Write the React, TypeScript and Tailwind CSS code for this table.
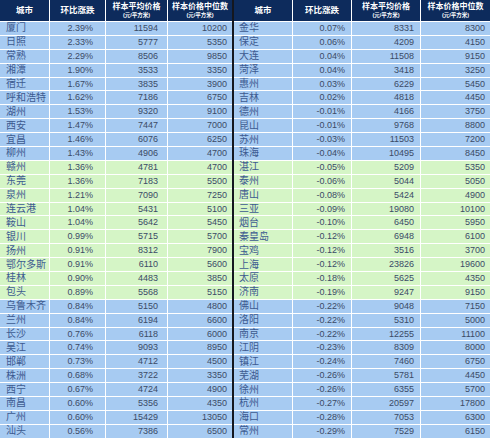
import * as React from "react";

type Row = [string, string, string, string];

const left: Row[] = [
  ["厦门", "2.39%", "11594", "10200"],
  ["日照", "2.33%", "5777", "5350"],
  ["常熟", "2.29%", "8506", "9850"],
  ["湘潭", "1.90%", "3533", "3350"],
  ["宿迁", "1.67%", "3835", "3900"],
  ["呼和浩特", "1.62%", "7186", "6750"],
  ["湖州", "1.53%", "9320", "9100"],
  ["西安", "1.47%", "7447", "7000"],
  ["宜昌", "1.46%", "6076", "6250"],
  ["柳州", "1.43%", "4906", "4700"],
  ["赣州", "1.36%", "4781", "4700"],
  ["东莞", "1.36%", "7183", "5500"],
  ["泉州", "1.21%", "7090", "7250"],
  ["连云港", "1.04%", "5431", "5100"],
  ["鞍山", "1.04%", "5642", "5450"],
  ["银川", "0.99%", "5715", "5700"],
  ["扬州", "0.91%", "8312", "7900"],
  ["鄂尔多斯", "0.91%", "6110", "5600"],
  ["桂林", "0.90%", "4483", "3850"],
  ["包头", "0.89%", "5568", "5150"],
  ["乌鲁木齐", "0.84%", "5150", "4800"],
  ["兰州", "0.84%", "6194", "6600"],
  ["长沙", "0.76%", "6118", "6000"],
  ["吴江", "0.74%", "9093", "8950"],
  ["邯郸", "0.73%", "4712", "4500"],
  ["株洲", "0.68%", "3722", "3350"],
  ["西宁", "0.67%", "4724", "4900"],
  ["南昌", "0.60%", "5356", "4350"],
  ["广州", "0.60%", "15429", "13050"],
  ["汕头", "0.56%", "7386", "6500"],
];

const right: Row[] = [
  ["金华", "0.07%", "8331", "8300"],
  ["保定", "0.06%", "4209", "4150"],
  ["大连", "0.04%", "11508", "9150"],
  ["菏泽", "0.04%", "3418", "3250"],
  ["惠州", "0.03%", "6229", "5450"],
  ["吉林", "0.02%", "4818", "4450"],
  ["德州", "-0.01%", "4166", "3750"],
  ["昆山", "-0.01%", "9768", "8800"],
  ["苏州", "-0.03%", "11503", "7200"],
  ["珠海", "-0.04%", "10495", "8450"],
  ["湛江", "-0.05%", "5209", "5350"],
  ["泰州", "-0.06%", "5044", "5050"],
  ["唐山", "-0.08%", "5424", "4900"],
  ["三亚", "-0.09%", "19080", "10100"],
  ["烟台", "-0.10%", "6450", "5950"],
  ["秦皇岛", "-0.12%", "6948", "6100"],
  ["宝鸡", "-0.12%", "3516", "3700"],
  ["上海", "-0.12%", "23826", "19600"],
  ["太原", "-0.18%", "5625", "4350"],
  ["济南", "-0.19%", "9247", "9150"],
  ["佛山", "-0.22%", "9048", "7150"],
  ["洛阳", "-0.22%", "5310", "5000"],
  ["南京", "-0.22%", "12255", "11100"],
  ["江阴", "-0.23%", "8309", "8000"],
  ["镇江", "-0.24%", "7460", "6750"],
  ["芜湖", "-0.26%", "5781", "4450"],
  ["徐州", "-0.26%", "6355", "5700"],
  ["杭州", "-0.27%", "20597", "17800"],
  ["海口", "-0.28%", "7053", "6300"],
  ["常州", "-0.29%", "7529", "6150"],
];

// rows 11-20 are green, the rest blue
const rowBg = (i: number) => (i >= 10 && i < 20 ? "bg-[#d5f5c6]" : "bg-[#a7cbf2]");

const head = "flex items-center justify-center bg-[#0d2b5c] leading-none text-white font-bold";

function Half({ rows, cols, pads }: { rows: Row[]; cols: string; pads: [string, string, string, string] }) {
  return (
    <div className={`grid ${cols} grid-rows-[21px_repeat(30,12.9px)] gap-px bg-white`}>
      <div className={`${head} text-[8.5px]`}>城市</div>
      <div className={`${head} text-[8.5px]`}>环比涨跌</div>
      <div className={`${head} flex-col`}>
        <span className="text-[8px]">样本平均价格</span>
        <span className="mt-[2px] text-[5.5px]">(元/平方米)</span>
      </div>
      <div className={`${head} flex-col`}>
        <span className="text-[8px]">样本价格中位数</span>
        <span className="mt-[2px] text-[5.5px]">(元/平方米)</span>
      </div>
      {rows.map((r, i) => (
        <React.Fragment key={r[0]}>
          <div className={`${rowBg(i)} ${pads[0]} flex items-center text-[10px] leading-none text-[#3d5a90]`}>{r[0]}</div>
          <div className={`${rowBg(i)} ${pads[1]} flex items-center justify-end text-[9px] leading-none text-[#3b4a66]`}>{r[1]}</div>
          <div className={`${rowBg(i)} ${pads[2]} flex items-center justify-end text-[9px] leading-none text-[#3b4a66]`}>{r[2]}</div>
          <div className={`${rowBg(i)} ${pads[3]} flex items-center justify-end text-[9px] leading-none text-[#3b4a66]`}>{r[3]}</div>
        </React.Fragment>
      ))}
    </div>
  );
}

export default function App() {
  return (
    <div
      className="flex h-[438px] w-[490px] overflow-hidden bg-white"
      style={{ fontFamily: '"Liberation Sans", "Noto Sans CJK SC", sans-serif' }}
    >
      <div className="w-[232px] shrink-0">
        <Half rows={left} cols="grid-cols-[49px_55px_61px_64px]" pads={["pl-[6px]", "pr-[12px]", "pr-[9px]", "pr-[5px]"]} />
      </div>
      <div className="w-[2px] shrink-0 bg-[#14171f]" />
      <div className="w-[256px] shrink-0">
        <Half rows={right} cols="grid-cols-[58px_58px_68px_69px]" pads={["pl-[5px]", "pr-[6px]", "pr-[6px]", "pr-[5px]"]} />
      </div>
    </div>
  );
}
